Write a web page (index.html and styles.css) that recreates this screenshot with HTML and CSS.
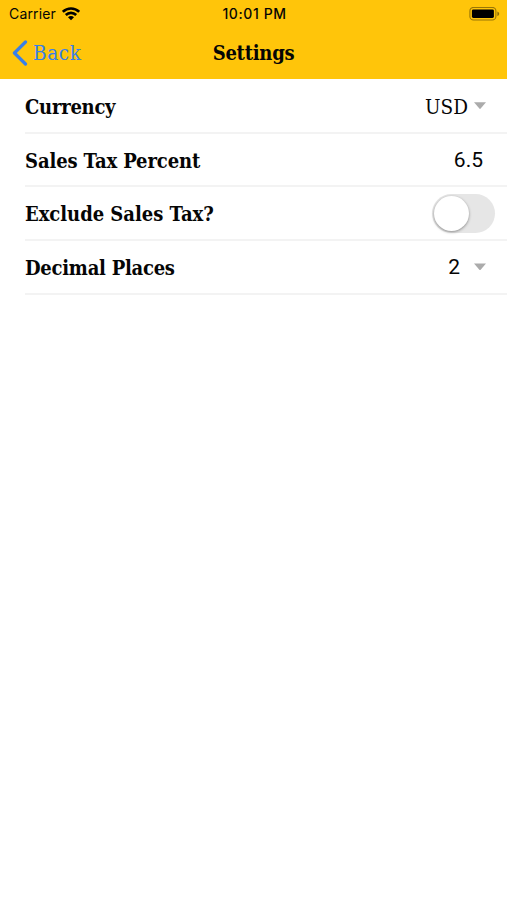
FILE: index.html
```html
<!DOCTYPE html>
<html lang="en">
<head>
<meta charset="utf-8">
<title>Settings</title>
<link rel="stylesheet" href="styles.css">
</head>
<body>
<header class="header">
  <div class="status">
    <div class="carrier"><span>Carrier</span>
      <svg class="wifi" width="18" height="14" viewBox="0 0 18 14"><g fill="none" stroke="#000" stroke-width="2.6"><path d="M.8 4.9C5.4.3 12.6.3 17.2 4.9"/><path d="M3.8 8c2.9-2.9 7.5-2.9 10.4 0"/></g><path d="M6 10.2c1.7-1.6 4.3-1.6 6 0l-3 3z"/></svg>
    </div>
    <span class="time">10:01 PM</span>
    <svg class="battery" width="31" height="14" viewBox="0 0 31 14"><rect x=".9" y=".4" width="26" height="12.6" rx="3.6" fill="none" stroke="#000" stroke-opacity=".4" stroke-width="1.1"/><rect x="2.9" y="2.4" width="22" height="8.6" rx="1.4"/><path d="M28.4 4.4c2.4 1 2.4 3.6 0 4.6z" fill-opacity=".45"/></svg>
  </div>
  <nav class="nav">
    <div class="back"><svg width="16" height="26" viewBox="0 0 16 26"><path d="M13.5 2 2.4 13l11.1 11" fill="none" stroke="#397fe8" stroke-width="3.2" stroke-linecap="round" stroke-linejoin="round"/></svg><span>Back</span></div>
    <h1 class="title">Settings</h1>
  </nav>
</header>
<main class="list">
  <div class="row"><span class="label currency">Currency</span><span class="value usd">USD</span><i class="arrow"></i></div>
  <div class="row"><span class="label percent">Sales Tax Percent</span><span class="value number rate">6.5</span></div>
  <div class="row"><span class="label exclude">Exclude Sales Tax?</span><span class="toggle"><i class="knob"></i></span></div>
  <div class="row"><span class="label places">Decimal Places</span><span class="value number digits">2</span><i class="arrow"></i></div>
</main>
</body>
</html>
```
FILE: styles.css
```css
* { box-sizing: border-box; }
body { margin: 0; height: 900px; background: #fff; color: #050505; font-family: "Roboto Slab", "DejaVu Serif Condensed", "DejaVu Serif", serif; font-stretch: condensed; }
.header { height: 79px; background: #ffc50a; }
.status { height: 27px; padding: 0 7px 0 9px; display: grid; grid-template-columns: 1fr auto 1fr; align-items: center; font: 14px Inter, sans-serif; }
.carrier { display: flex; align-items: center; gap: 6px; letter-spacing: .15px; }
.time { font-weight: 500; font-size: 14px; letter-spacing: .6px; }
.battery { justify-self: end; }
.nav { height: 52px; display: grid; grid-template-columns: 1fr auto 1fr; align-items: center; padding: 0 12px; }
.back { display: flex; align-items: center; gap: 5px; color: #397fe8; font-size: 20.5px; letter-spacing: .6px; }
.title { margin: 0; font-size: 20px; font-weight: 700; letter-spacing: -.25px; }
.list { margin-left: 25px; padding-top: 1px; }
.row { height: 53.7px; display: flex; align-items: center; border-bottom: 2px solid #f3f3f3; padding-right: 21px; font-size: 20.5px; }
.label { flex: 1; padding-top: 2px; font-weight: 700; font-size: 20px; letter-spacing: -.25px; white-space: nowrap; }
.percent { letter-spacing: -.12px; }
.exclude { letter-spacing: -.03px; }
.usd { padding-top: 2px; }
.number { padding-top: 1px; font-family: "Roboto Slab", Roboto, sans-serif; font-size: 21px; font-stretch: normal; }
.rate { margin-right: 3px; }
.arrow { width: 12px; height: 7px; margin-left: 6px; background: #ababab; clip-path: polygon(0 0, 100% 0, 50% 100%); }
.digits + .arrow { margin-left: 14px; }
.toggle { width: 63px; height: 39px; margin-right: -9px; padding: 2px; border-radius: 20px; background: #e6e6e6; }
.knob { display: block; width: 35px; height: 35px; border-radius: 50%; background: #fff; box-shadow: 0 1px 3px #0006; }
```
